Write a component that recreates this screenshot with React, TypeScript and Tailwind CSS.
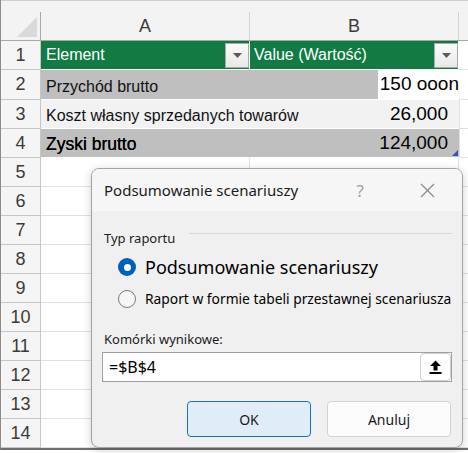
import React from 'react';

const CELL_FONT = "font-['Liberation_Sans',Arial,sans-serif]";

const DropButton = () => (
  <div className="w-[24px] h-[25px] border border-[#a9a9a9] bg-gradient-to-b from-[#fbfbfb] to-[#e9e9e9] flex items-center justify-center">
    <svg width="9" height="5" viewBox="0 0 9 5">
      <path d="M0 0 H9 L4.5 5 Z" fill="#5a5a5a" />
    </svg>
  </div>
);

const RowHead = ({ n }: { n: number }) => (
  <div className="w-[40px] shrink-0 h-full border-r border-b border-[#c6c6c6] bg-[#f5f5f5] flex items-center justify-center text-[18px] text-[#3b3b3b]">
    {n}
  </div>
);

const emptyRows = [5, 6, 7, 8, 9, 10, 11, 12, 13, 14];

export default function App() {
  return (
    <div className={`relative w-[468px] h-[453px] overflow-hidden bg-white ${CELL_FONT}`}>
      <div className="w-[468px] border-l border-[#8c8c8c] border-b-2 border-b-[#6e6e6e]">
        {/* top band */}
        <div className="h-[12px] bg-[#f3f3f3] border-t border-[#d0d0d0]" />

        {/* column headers */}
        <div className="flex h-[29px] bg-[#f3f3f3] border-b border-[#a8a8a8]">
          <div className="w-[40px] shrink-0 border-r border-[#a8a8a8] flex items-end justify-end pr-[3px] pb-[3px]">
            <svg width="20" height="20" viewBox="0 0 20 20">
              <path d="M20 0 V20 H0 Z" fill="#dadada" />
            </svg>
          </div>
          <div className="w-[209px] shrink-0 border-r border-[#d4d4d4] flex items-center justify-center text-[18px] text-[#3b3b3b]">A</div>
          <div className="w-[209px] shrink-0 border-r border-[#d4d4d4] flex items-center justify-center text-[18px] text-[#3b3b3b]">B</div>
          <div className="flex-1" />
        </div>

        {/* row 1 */}
        <div className="flex h-[29px]">
          <RowHead n={1} />
          <div className="w-[209px] shrink-0 bg-[#117b43] border-r border-b border-white flex items-center justify-between pl-[5px] pr-0 text-white text-[16px]">
            <span>Element</span>
            <DropButton />
          </div>
          <div className="w-[209px] shrink-0 bg-[#117b43] border-r border-b border-white flex items-center justify-between pl-[4px] pr-0 text-white text-[16px]">
            <span>Value (Wartość)</span>
            <DropButton />
          </div>
          <div className="flex-1 border-b border-[#e0e0e0]" />
        </div>

        {/* row 2 */}
        <div className="flex h-[30px]">
          <RowHead n={2} />
          <div className="w-[418px] shrink-0 flex border-b border-white">
            <div className="flex-1 bg-[#bfbfbf] flex items-center pl-[5px] pt-[5px] text-[16px] text-[#111]">Przychód brutto</div>
            <div className="w-[81px] bg-white flex items-center justify-end text-[19px] text-black">150 ooon</div>
          </div>
          <div className="flex-1 border-b border-[#e0e0e0]" />
        </div>

        {/* row 3 */}
        <div className="flex h-[29px]">
          <RowHead n={3} />
          <div className="w-[418px] shrink-0 bg-[#f2f2f2] border-b border-white flex items-center justify-between pl-[5px] pr-[11px]">
            <span className="text-[16px] text-[#111] pt-[3px]">Koszt własny sprzedanych towarów</span>
            <span className="text-[19px] text-black">26,000</span>
          </div>
          <div className="flex-1 border-l border-[#e0e0e0] border-b border-b-[#e0e0e0]" />
        </div>

        {/* row 4 */}
        <div className="flex h-[29px]">
          <RowHead n={4} />
          <div className="relative w-[418px] shrink-0 bg-[#bfbfbf] border-b border-white flex items-center justify-between pl-[5px] pr-[11px]">
            <span className="text-[17.5px] text-black pt-[3px] [text-shadow:0_0_0.4px_#000]">Zyski brutto</span>
            <span className="text-[19px] text-black">124,000</span>
            <svg className="absolute right-[1px] bottom-[1px]" width="6" height="6" viewBox="0 0 6 6">
              <path d="M6 0 V6 H0 Z" fill="#3557b5" />
            </svg>
          </div>
          <div className="flex-1 border-l border-[#e0e0e0] border-b border-b-[#e0e0e0]" />
        </div>

        {emptyRows.map((n) => (
          <div key={n} className="flex h-[29px]">
            <RowHead n={n} />
            <div className="w-[209px] shrink-0 border-r border-b border-[#e0e0e0]" />
            <div className="w-[209px] shrink-0 border-r border-b border-[#e0e0e0]" />
            <div className="flex-1 border-b border-[#e0e0e0]" />
          </div>
        ))}
      </div>

      {/* dialog */}
      <div className="absolute left-[91px] top-[168px] w-[372px] h-[280px] rounded-[8px] border border-[#a3a3a3] bg-[#f0f0f0] shadow-[0_2px_10px_rgba(0,0,0,0.18)] overflow-hidden flex flex-col font-['Noto_Sans',sans-serif] text-[#1b1b1b]">
        <div className="h-[42px] shrink-0 bg-[#f6f6f6] flex items-center pl-[12px]">
          <span className="text-[15px]">Podsumowanie scenariuszy</span>
          <div className="ml-auto flex items-center pr-[27px]">
            <span className="text-[17px] text-[#a0a0a0] leading-none mr-[56px]">?</span>
            <svg width="15" height="15" viewBox="0 0 15 15">
              <path d="M1 1 L14 14 M14 1 L1 14" stroke="#8a8a8a" strokeWidth="1.2" />
            </svg>
          </div>
        </div>

        <div className="flex flex-col px-[10px]">
          <div className="mt-[18px] flex items-start h-[18px]">
            <span className="ml-[2px] text-[13px] leading-[18px]">Typ raportu</span>
            <div className="flex-1 h-px bg-[#d8d8d8] ml-[14px] mt-[4px]" />
          </div>

          <div className="mt-[8px] h-[24px] flex items-center pl-[16px]">
            <div className="w-[18px] h-[18px] rounded-full bg-[#005fb8] flex items-center justify-center">
              <div className="w-[7px] h-[7px] rounded-full bg-white" />
            </div>
            <span className="ml-[9px] text-[18px] text-black">Podsumowanie scenariuszy</span>
          </div>

          <div className="mt-[9px] h-[22px] flex items-center pl-[16px]">
            <div className="w-[18px] h-[18px] shrink-0 rounded-full border border-[#7a7a7a] bg-[#f6f6f6]" />
            <span className="ml-[9px] text-[13.8px] text-black whitespace-nowrap">Raport w formie tabeli przestawnej scenariusza</span>
          </div>

          <div className="mt-[20px] h-[18px] flex items-center">
            <span className="ml-[2px] text-[13px] leading-[18px]">Komórki wynikowe:</span>
          </div>

          <div className="mt-[4px] h-[30px] bg-white border border-[#a0a0a0] flex items-center">
            <span className="flex-1 pl-[6px] text-[16px] text-black">=$B$4</span>
            <div className="w-[31px] h-[28px] border border-[#cfcfcf] rounded-[4px] bg-white flex items-center justify-center">
              <svg width="13" height="14" viewBox="0 0 13 14">
                <path d="M6.5 0.5 L12 6 H8.5 V10.5 H4.5 V6 H1 Z" fill="#000" />
                <rect x="0.5" y="12" width="12" height="2" fill="#000" />
              </svg>
            </div>
          </div>

          <div className="mt-[19px] flex justify-end gap-[16px] pr-[1px]">
            <button className="w-[124px] h-[36px] rounded-[4px] border border-[#1b6fc4] bg-[#e0edf9] text-[14px] text-[#1b1b1b]">OK</button>
            <button className="w-[124px] h-[36px] rounded-[4px] border border-[#d3d3d3] bg-[#fcfcfc] text-[14px] text-[#1b1b1b]">Anuluj</button>
          </div>
        </div>
      </div>
    </div>
  );
}
